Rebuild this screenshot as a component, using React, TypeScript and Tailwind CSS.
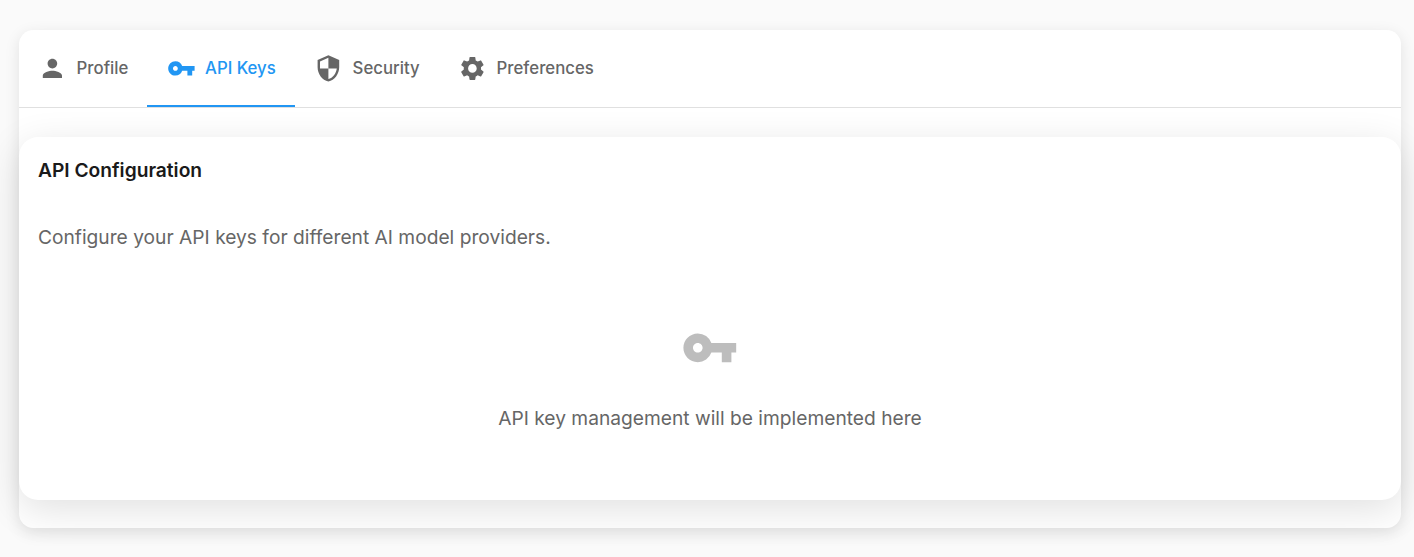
import React from "react";
import { MdPerson, MdVpnKey, MdSecurity, MdSettings } from "react-icons/md";

const tabs = [
  { label: "Profile", Icon: MdPerson, width: "w-[128px]" },
  { label: "API Keys", Icon: MdVpnKey, width: "w-[148px]", active: true },
  { label: "Security", Icon: MdSecurity, width: "w-[144px]" },
  { label: "Preferences", Icon: MdSettings, width: "w-[174px]" },
];

export default function App() {
  return (
    <div className="h-[557px] overflow-hidden bg-[#fafafa] pt-[30px] pr-[13px] pl-[19px] font-['Inter',sans-serif] text-[#666666]">
      <div className="h-[498px] rounded-[14.4px] bg-white shadow-[0_4.8px_14.4px_rgba(0,0,0,0.1)]">
        <div className="flex h-[78px] border-b border-[#e0e0e0]">
          {tabs.map(({ label, Icon, width, active }) => (
            <button
              key={label}
              className={`flex h-[77px] shrink-0 items-center gap-[9.6px] text-[16.8px] leading-[27px] font-medium ${width} ${active ? "border-b-2 border-[#2196f3] pt-[2px] pl-[19.6px] text-[#2196f3]" : "pl-[19.2px]"}`}
            >
              <Icon className="size-[28.8px] shrink-0" />
              <span className="whitespace-nowrap">{label}</span>
            </button>
          ))}
        </div>
        <section className="mt-[29px] h-[363px] rounded-[19.2px] bg-white px-[19px] pt-[19px] shadow-[0_9.6px_38.4px_rgba(0,0,0,0.12)]">
          <h2 className="text-[19.2px] leading-[29px] font-semibold text-[#1a1a1a]">API Configuration</h2>
          <p className="mt-[38px] text-[19.2px] leading-[29px]">Configure your API keys for different AI model providers.</p>
          <div className="mt-[67px] flex flex-col items-center">
            <MdVpnKey className="size-[57.6px] text-[#bdbdbd]" />
            <p className="mt-[27.4px] text-[19.2px] leading-[29px]">API key management will be implemented here</p>
          </div>
        </section>
      </div>
    </div>
  );
}
